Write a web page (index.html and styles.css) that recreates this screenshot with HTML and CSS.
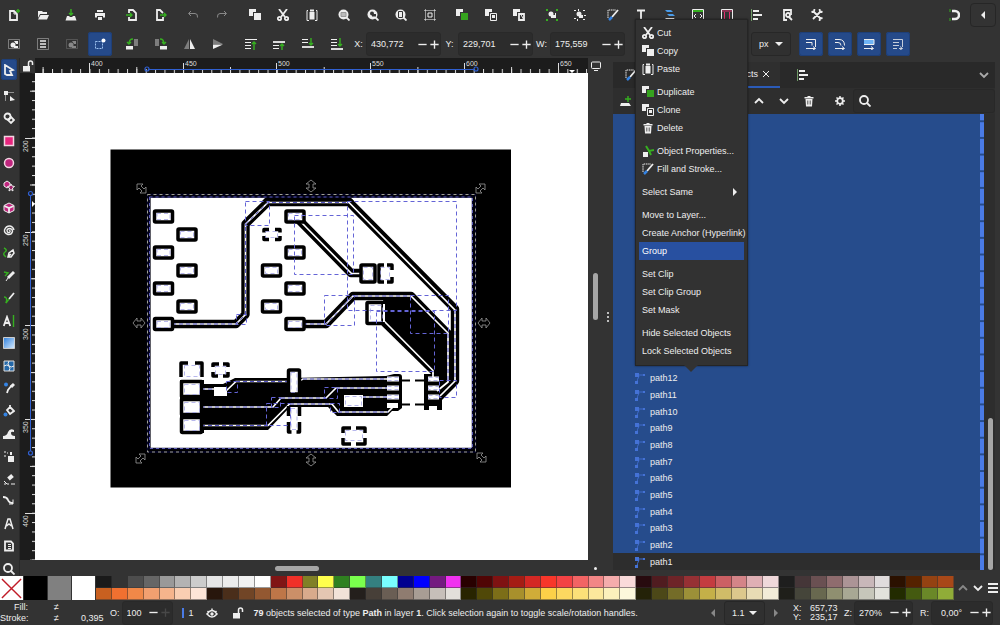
FILE: index.html
```html
<!DOCTYPE html>
<html lang="en">
<head>
<meta charset="utf-8">
<title>Vector editor</title>
<link rel="stylesheet" href="styles.css">
</head>
<body>
<svg class="sprite" aria-hidden="true">
  <symbol id="i-new" viewBox="0 0 12 12"><path class="l2" d="M2 2h4l3 3v6H2z"/><path class="l" d="M6 2v3h3"/><path class="g" d="M10 0v4M8 2h4"/></symbol>
  <symbol id="i-open" viewBox="0 0 12 12"><path class="f" d="M1 2h4l1 1h4v2H3L1 9zM3.500 6H12l-2 4.500H1z"/></symbol>
  <symbol id="i-save" viewBox="0 0 12 12"><path class="f" d="M2 7h2l1 1h2l1-1h2l1.500 4.500H.5z"/><path class="g" d="M6 0v6M4 4l2 2 2-2"/></symbol>
  <symbol id="i-print" viewBox="0 0 12 12"><path class="f" d="M3 1h6v2H3zM1 4h10v4.500H9V7H3v1.500H1zM4 8h4v3H4z"/></symbol>
  <symbol id="i-import" viewBox="0 0 12 12"><path class="l2" d="M3 4V1h4l3 3v7H3V8"/><path class="g" d="M0 6h6M4 4l2 2-2 2"/></symbol>
  <symbol id="i-export" viewBox="0 0 12 12"><path class="l2" d="M8 4L5 1H2v10h6V8"/><path class="g" d="M5 6h6M9 4l2 2-2 2"/></symbol>
  <symbol id="i-undo" viewBox="0 0 12 12"><path class="l" d="M4 2L1.500 4.500 4 7M2 4.500h6q3 0 2.500 4"/></symbol>
  <symbol id="i-redo" viewBox="0 0 12 12"><path class="l" d="M8 2l2.500 2.500L8 7M10 4.500H4q-3 0-2.500 4"/></symbol>
  <symbol id="i-copy" viewBox="0 0 12 12"><path class="f" d="M0 0h7v3H4v4H0zM5 4h7v7H5z"/></symbol>
  <symbol id="i-cut" viewBox="0 0 12 12"><path class="l2" d="M2 0l6 8M10 0L4 8"/><circle class="l2" cx="2.500" cy="9.500" r="1.700"/><circle class="l2" cx="9.500" cy="9.500" r="1.700"/></symbol>
  <symbol id="i-paste" viewBox="0 0 12 12"><path class="l" d="M2 1.500H1v10h2M10 1.500h1v10H9"/><path class="f" d="M3.500 3h5v7.500h-5zM4 .5h4v2H4z"/></symbol>
  <symbol id="i-zsel" viewBox="0 0 12 12"><circle class="f" cx="5.500" cy="5.500" r="5"/><path class="l2" d="M8 8l3.500 3.500"/><path d="M3 3.500h5v4H3z" fill="#bbb" stroke="#999"/></symbol>
  <symbol id="i-zdraw" viewBox="0 0 12 12"><circle class="f" cx="5.500" cy="5.500" r="5"/><path class="l2" d="M8 8l3.500 3.500"/><circle cx="5" cy="4.500" r="2" fill="#333"/><path fill="#333" d="M5 5h4v2.500H5z"/></symbol>
  <symbol id="i-zpage" viewBox="0 0 12 12"><circle class="f" cx="5.500" cy="5.500" r="5"/><path class="l2" d="M8 8l3.500 3.500"/><path fill="none" stroke="#333" d="M3.500 2.500h4v6h-4z"/></symbol>
  <symbol id="i-zcenter" viewBox="0 0 12 12"><path class="l" d="M1.500 0v12M10.500 0v12M0 1.500h12M0 10.500h12" opacity=".55"/><path class="l" d="M4 4h4v4H4z"/></symbol>
  <symbol id="i-dup" viewBox="0 0 12 12"><path class="f" d="M0 0h7v3H4v4H0z"/><path fill="#36a31f" d="M5 4h7v7H5z"/></symbol>
  <symbol id="i-clone" viewBox="0 0 12 12"><path class="f" d="M0 0h7v3H4v4H0z"/><path class="l" d="M5.500 4.500h6v7h-6z"/><path class="f" d="M7 6h3v3H7z"/></symbol>
  <symbol id="i-unclone" viewBox="0 0 12 12"><path class="f" d="M0 0h7v3H4v4H0z"/><path class="l2" d="M6 5h5v6H6z"/><path class="l" d="M7 4l4 7"/></symbol>
  <symbol id="i-group" viewBox="0 0 12 12"><circle class="f" cx="5" cy="5" r="2.500"/><path class="f" d="M5 6h4V4h1v5H5z"/><path fill="#36b020" d="M0 0h2v2H0zM10 0h2v2h-2zM0 10h2v2H0zM10 10h2v2h-2z"/></symbol>
  <symbol id="i-ungroup" viewBox="0 0 12 12"><circle class="f" cx="5" cy="5" r="2.500"/><path class="f" d="M5 6h4v3H5zM0 1h2v1H0zM4 0h1v2H4zM9 1h2v1H9zM0 9h2v1H0zM3 10h1v2H3zM10 6h2v1h-2zM9 10h2v1H9z"/></symbol>
  <symbol id="i-fill" viewBox="0 0 12 12"><path class="l" d="M1 9V1h8" stroke-dasharray="1.500 .7"/><path class="l2" d="M11 1L5 8"/><path d="M5 8l-3 3" stroke="#3584e4" stroke-width="2.500"/></symbol>
  <symbol id="i-text" viewBox="0 0 12 12"><path class="l2" d="M2 1.500h8M6 1v10"/></symbol>
  <symbol id="i-layers" viewBox="0 0 12 12"><path d="M1 1h6l2 2H3zM3 5h6l2 2H5z" fill="#4a9be8"/><path class="f" d="M1 9h9l1 2H3z"/></symbol>
  <symbol id="i-xml" viewBox="0 0 12 12"><path class="l" d="M.5 12V.5h11V12M4 5L2 7l2 2M8 5l2 2-2 2"/><path d="M1 2h10" stroke="#36b020" stroke-width="2"/></symbol>
  <symbol id="i-sel" viewBox="0 0 12 12"><path class="l" d="M.5 12V.5h11V12"/><path d="M1 2h10M3.500 3v8M8.500 3v8" stroke="#e0306e"/></symbol>
  <symbol id="i-align" viewBox="0 0 12 12"><path d="M1.500 0v12" stroke="#6f9a66"/><path class="f" d="M3 1h6v2H3zM3 5h9v2H3zM3 9h5v2H3z"/></symbol>
  <symbol id="i-prefs" viewBox="0 0 12 12"><path class="l2" d="M9 6V1H2v10h3"/><circle class="l2" cx="6" cy="6" r="2"/><path class="l2" d="M7 8l3 3"/></symbol>
  <symbol id="i-tools" viewBox="0 0 12 12"><path class="l2" d="M2 2l8 8M10 2L2 10M.500 3l2.500-.5L3.500 0M11.500 9l-2.500.5-.5 2.500M8.500 0l.5 2.500 2.500.5"/></symbol>
  <symbol id="i-snap" viewBox="0 0 12 12"><path class="l" stroke-width="2.500" d="M4 2h3a4 4 0 0 1 0 8H4"/><path d="M2 0v3M2 9v3" stroke="#36b020"/></symbol>
  <symbol id="i-left" viewBox="0 0 12 12"><path class="f" d="M8 2v8L4 6z"/></symbol>
  <symbol id="i-right" viewBox="0 0 12 12"><path class="f" d="M4 2v8l4-4z"/></symbol>
  <symbol id="i-selall" viewBox="0 0 12 12"><path class="l" d="M.5 1.500h11v9H.5z" opacity=".4"/><circle class="f" cx="5" cy="7" r="2.500"/><path class="f" d="M6 3h4v3H8zM6 8h4v2H6z"/></symbol>
  <symbol id="i-sellay" viewBox="0 0 12 12"><path class="l" d="M.5.5h11v11H.5z" opacity=".4"/><path d="M3 3h6M3 6h6M3 9h6" stroke="currentColor" stroke-width="1.500"/></symbol>
  <symbol id="i-touch" viewBox="0 0 12 12"><path fill="none" stroke="#9cc0ee" stroke-dasharray="2 1" d="M1.500 3.500h7v7h-7z"/><circle cx="9.500" cy="2.500" r="2" fill="#fff"/></symbol>
  <symbol id="i-rotl" viewBox="0 0 12 12"><path class="f" d="M0 8h7v3.500H0z"/><path class="f" opacity=".4" d="M8 1h4v7H8z"/><path class="g" d="M7 1Q3 1 3 6M1 4l2 2 2-2"/></symbol>
  <symbol id="i-rotr" viewBox="0 0 12 12"><path class="f" d="M5 8h7v3.500H5z"/><path class="f" opacity=".4" d="M0 1h4v7H0z"/><path class="g" d="M5 1q4 0 4 5M7 4l2 2 2-2"/></symbol>
  <symbol id="i-fliph" viewBox="0 0 12 12"><path class="f" opacity=".4" d="M5 1v10H0z"/><path class="f" d="M6 1v10h5z"/></symbol>
  <symbol id="i-flipv" viewBox="0 0 12 12"><path class="f" opacity=".4" d="M1 1v5h10z"/><path class="f" d="M1 11V6.500h10z"/></symbol>
  <symbol id="i-top" viewBox="0 0 12 12"><path class="l" d="M0 1.500h12M0 4.500h6M0 7.500h6M0 10.500h6"/><path class="g" d="M9 12V4M7 6l2-2 2 2"/></symbol>
  <symbol id="i-raise" viewBox="0 0 12 12"><path class="l" d="M0 7.500h6M0 10.500h6"/><path class="l2" d="M0 4h12"/><path class="g" d="M9 12V6M7 8l2-2 2 2"/></symbol>
  <symbol id="i-lower" viewBox="0 0 12 12"><path class="l" d="M0 1.500h6M0 4.500h6"/><path class="l2" d="M0 9h12"/><path class="g" d="M9 0v7M7 5l2 2 2-2"/></symbol>
  <symbol id="i-bottom" viewBox="0 0 12 12"><path class="l" d="M0 1.500h6M0 4.500h6M0 7.500h6"/><path class="l2" d="M0 11h12"/><path class="g" d="M9 0v8M7 6l2 2 2-2"/></symbol>
  <symbol id="i-s1" viewBox="0 0 12 12"><path class="l" d="M1 1.500h9.500V9M1 4.500h6v3M1 10.500h9M8 8.500l2.500 2-2.500 1.500"/></symbol>
  <symbol id="i-s2" viewBox="0 0 12 12"><path class="l" d="M1 1.500h4q5.500 0 5.500 6M1 4.500h3q3 0 3 3M1 10.500h9M8 8.500l2.500 2-2.500 1.500"/></symbol>
  <symbol id="i-s3" viewBox="0 0 12 12"><path d="M1 1h10v6H1z" fill="#6fb4f5"/><path class="l" d="M1 1.500h10v5H1M1 10.500h9M8 8.500l2.500 2-2.500 1.500"/></symbol>
  <symbol id="i-s4" viewBox="0 0 12 12"><path class="l" d="M1 1.500h9.500V9M1 4.500h6M1 7.500h6M1 10.500h4M7 10.500h3M8 8.500l2.500 2-2.500 1.500" opacity=".8"/></symbol>
  <symbol id="i-arrow" viewBox="0 0 12 12"><path class="l2" d="M2 1l8 5-3 1 2 4H4l-2-1z"/></symbol>
  <symbol id="i-node" viewBox="0 0 12 12"><path class="l" d="M5 2.500h6M2.500 5v6" opacity=".5"/><path class="f" d="M1 1h4v4H1zM7 6l5 4-5 1z"/></symbol>
  <symbol id="i-shape" viewBox="0 0 12 12"><circle class="l2" cx="4.500" cy="4.500" r="3"/><path class="l2" d="M8 5l3 3-3 3-3-3z"/></symbol>
  <symbol id="i-rect" viewBox="0 0 12 12"><path d="M1.500 1.500h9v9h-9z" fill="#e8257e" stroke="#f3d5e2" stroke-width="1.500"/></symbol>
  <symbol id="i-circ" viewBox="0 0 12 12"><circle cx="6" cy="6" r="4.500" fill="#c0257e" stroke="#f3d5e2" stroke-width="1.500"/></symbol>
  <symbol id="i-star" viewBox="0 0 12 12"><path d="M4 1l3 2v3L4 8 1 6V3z" fill="#c0257e" stroke="#eee"/><path d="M8 4l1 2 2.500.5-2 1.500.5 3-2-1.500L6 11l.5-3-2-1.500L7 6z" fill="#a0206a" stroke="#eee"/></symbol>
  <symbol id="i-cube" viewBox="0 0 12 12"><path d="M6 1l5 2.500v5L6 11 1 8.500v-5z" fill="#c0257e" stroke="#eee"/><path class="l2" d="M1.500 4L6 6l4.500-2M6 6v5"/></symbol>
  <symbol id="i-spiral" viewBox="0 0 12 12"><path class="l" stroke-width="1.400" d="M6 6q1.500-1 1 .8-1 1.600-2.500.2Q3 4.500 6 3.500q3.500 0 3.500 3Q8.500 10 5 9.500 1 8 1.500 5 3 .8 7 1q3 .5 4 4"/></symbol>
  <symbol id="i-pen" viewBox="0 0 12 12"><path class="g" d="M1 1q4 2 1 4t1 5"/><path class="l" stroke-width="1.500" d="M5 10l1-4 4-3 1 3-3 4zM5 10l3-3"/></symbol>
  <symbol id="i-pencil" viewBox="0 0 12 12"><path class="g" d="M1 2l4 1-3 3"/><path class="l" stroke-width="3" d="M11 2L5 8"/><path class="l" d="M5 8l-2 3"/></symbol>
  <symbol id="i-brush" viewBox="0 0 12 12"><path class="g" d="M1 5q4 0 2 6"/><path class="l2" d="M11 1L6 7"/><path class="g" d="M6 7l-3 4"/></symbol>
  <symbol id="i-type" viewBox="0 0 12 12"><path class="l2" d="M.8 11L4 2l3.200 9M2 8h4"/><path class="g" d="M10.500 0v12"/></symbol>
  <symbol id="i-grad" viewBox="0 0 12 12"><defs><linearGradient id="gr" x2="1" y2="1"><stop stop-color="#2f80dc"/><stop offset="1" stop-color="#d8ecff"/></linearGradient></defs><path d="M.5.5h11v11H.5z" fill="url(#gr)" stroke="#ccc"/></symbol>
  <symbol id="i-mesh" viewBox="0 0 12 12"><path d="M1 1h10v10H1z" fill="#2468a8" stroke="#ddd"/><path class="l" d="M6 1q-2 3 0 5t0 5M1 6q3-2 5 0t5 0"/></symbol>
  <symbol id="i-drop" viewBox="0 0 12 12"><path class="l2" d="M9 3L5 8l-1 3"/><path class="l" stroke-width="3" d="M11 2L8 5"/><circle cx="3" cy="2.500" r="2" fill="#3584e4"/></symbol>
  <symbol id="i-bucket" viewBox="0 0 12 12"><path class="l2" d="M7 2l4 4-4 3-3-4zM7 0v4"/><circle cx="2.500" cy="9.500" r="2" fill="#3584e4"/></symbol>
  <symbol id="i-tweak" viewBox="0 0 12 12"><path class="f" d="M0 11V8q4 0 5-4 2-4 6-2v2q-3-1-3 1 0 3 4 3v3z"/></symbol>
  <symbol id="i-spray" viewBox="0 0 12 12"><path class="f" d="M5 6h6v6H5zM7 2h2v3H7z"/><path class="f" opacity=".5" d="M1 1h2v2H1zM4 2h1v2H4zM1 5h2v2H1z"/></symbol>
  <symbol id="i-eraser" viewBox="0 0 12 12"><path class="l" stroke-width="4" d="M9.500 2.500L5.500 6"/><path class="l" d="M1 8l3 3h2M8 11h4M1 11h2"/></symbol>
  <symbol id="i-conn" viewBox="0 0 12 12"><path class="l2" d="M0 2q4 0 5 3t5 3"/><path class="l" d="M10 4.500V9H6"/></symbol>
  <symbol id="i-lpe" viewBox="0 0 12 12"><path class="l" stroke-width="1.500" d="M2 11L5 1h2l3 10M3.500 8L6 6l2.500 2"/></symbol>
  <symbol id="i-pages" viewBox="0 0 12 12"><path class="l2" d="M2 1.500h6l2 2v7H2z"/><path class="l" d="M5 4.500h3M5 6.500h3M5 8.500h3"/></symbol>
  <symbol id="i-search" viewBox="0 0 12 12"><circle class="l2" cx="5" cy="5" r="4"/><path class="l2" d="M8 8l3.500 3.500"/></symbol>
  <symbol id="i-unlock" viewBox="0 0 12 12"><path class="f" d="M1 6h7v5.500H1z"/><path class="l" stroke-width="1.500" d="M6.500 6V3q0-2 2-2t2 2v2"/></symbol>
  <symbol id="i-screen" viewBox="0 0 12 12"><rect class="l" x="1.500" y="2" width="9" height="6.500" rx="1"/><path class="l" d="M4 10.500h4"/></symbol>
  <symbol id="i-trash" viewBox="0 0 12 12"><path class="f" d="M1.500 2h3V1h3v1h3v1.500h-9zM2.500 4h7l-.5 7.500H3z"/><path d="M4.800 5.500v4M7.200 5.500v4" stroke="#555"/></symbol>
  <symbol id="i-gear" viewBox="0 0 12 12"><circle class="l2" cx="6" cy="6" r="2.800"/><path class="l" stroke-width="1.500" d="M6 1v2M6 9v2M1 6h2M9 6h2M2.500 2.500l1.300 1.300M8.200 8.200l1.300 1.300M9.500 2.500L8.200 3.800M3.800 8.200L2.500 9.500"/></symbol>
  <symbol id="i-up" viewBox="0 0 12 12"><path class="l2" d="M2 8l4-4 4 4"/></symbol>
  <symbol id="i-down" viewBox="0 0 12 12"><path class="l2" d="M2 4l4 4 4-4"/></symbol>
  <symbol id="i-addlay" viewBox="0 0 12 12"><path class="f" d="M1 8h8l2 3H0z"/><path class="g" d="M8 1v6M5 4h6"/></symbol>
  <symbol id="i-props" viewBox="0 0 12 12"><path class="f" d="M1 7h5v5H1z"/><path d="M4 1l3 5 5-1M7 6l2 4" fill="none" stroke="#36b020" stroke-width="2"/></symbol>
  <symbol id="i-eye" viewBox="0 0 12 12"><path class="l" stroke-width="1.500" d="M1 7q5-7 10 0-5 6-10 0zM1.500 4l1 1M10.500 4l-1 1M6 1.500V4"/><circle class="f" cx="6" cy="7" r="1.700"/></symbol>
  <symbol id="i-menu" viewBox="0 0 12 12"><path class="l2" d="M1 2h10M1 6h10M1 10h10"/></symbol>
  <symbol id="i-minus" viewBox="0 0 12 12"><path class="l" stroke-width="1.500" d="M1.500 6h9"/></symbol>
  <symbol id="i-plus" viewBox="0 0 12 12"><path class="l" stroke-width="1.500" d="M1.500 6h9M6 1.500v9"/></symbol>
  <symbol id="i-x" viewBox="0 0 12 12"><path class="l" d="M3 3l6 6M9 3L3 9"/></symbol>
  <symbol id="i-path" viewBox="0 0 12 12"><path d="M3 12q0-5 2-8M5 3h6" stroke="#3f6bcc" fill="none"/><path fill="#4472d6" d="M1 1h4v4H1zM1 9h3v3H1zM9 2h2v2H9z"/></symbol>
</svg>

<div class="app">
  <header class="bar commands">
    <div class="icons wide">
      <button aria-label="New"><svg><use href="#i-new"/></svg></button><button aria-label="Open"><svg><use href="#i-open"/></svg></button><button aria-label="Save"><svg><use href="#i-save"/></svg></button><button aria-label="Print"><svg><use href="#i-print"/></svg></button><i></i>
      <button aria-label="Import"><svg><use href="#i-import"/></svg></button><button aria-label="Export"><svg><use href="#i-export"/></svg></button><i></i>
      <button class="dim" aria-label="Undo"><svg><use href="#i-undo"/></svg></button><button class="dim" aria-label="Redo"><svg><use href="#i-redo"/></svg></button><i></i>
      <button aria-label="Copy"><svg><use href="#i-copy"/></svg></button><button aria-label="Cut"><svg><use href="#i-cut"/></svg></button><button aria-label="Paste"><svg><use href="#i-paste"/></svg></button><i></i>
      <button aria-label="Zoom selection"><svg><use href="#i-zsel"/></svg></button><button aria-label="Zoom drawing"><svg><use href="#i-zdraw"/></svg></button><button aria-label="Zoom page"><svg><use href="#i-zpage"/></svg></button><button aria-label="Center page"><svg><use href="#i-zcenter"/></svg></button><i></i>
      <button aria-label="Duplicate"><svg><use href="#i-dup"/></svg></button><button aria-label="Clone"><svg><use href="#i-clone"/></svg></button><button aria-label="Unlink clone"><svg><use href="#i-unclone"/></svg></button><i></i>
      <button aria-label="Group"><svg><use href="#i-group"/></svg></button><button aria-label="Ungroup"><svg><use href="#i-ungroup"/></svg></button><i></i>
      <button aria-label="Fill and stroke"><svg><use href="#i-fill"/></svg></button><button aria-label="Text"><svg><use href="#i-text"/></svg></button><button aria-label="Layers"><svg><use href="#i-layers"/></svg></button><button aria-label="XML editor"><svg><use href="#i-xml"/></svg></button><button aria-label="Selectors"><svg><use href="#i-sel"/></svg></button><button aria-label="Align"><svg><use href="#i-align"/></svg></button><i></i>
      <button aria-label="Document properties"><svg><use href="#i-prefs"/></svg></button><button aria-label="Preferences"><svg><use href="#i-tools"/></svg></button>
    </div>
    <div class="snap"><button aria-label="Snap"><svg><use href="#i-snap"/></svg></button><button class="boxed" aria-label="Snap options"><svg><use href="#i-left"/></svg></button></div>
  </header>

  <div class="bar options">
    <div class="icons narrow">
      <button aria-label="Select all"><svg><use href="#i-selall"/></svg></button><button aria-label="Select in all layers"><svg><use href="#i-sellay"/></svg></button><button class="dim" aria-label="Deselect"><svg><use href="#i-selall"/></svg></button><button class="on" aria-label="Touch select"><svg><use href="#i-touch"/></svg></button><i></i>
      <button aria-label="Rotate left"><svg><use href="#i-rotl"/></svg></button><button aria-label="Rotate right"><svg><use href="#i-rotr"/></svg></button><button aria-label="Flip horizontal"><svg><use href="#i-fliph"/></svg></button><button aria-label="Flip vertical"><svg><use href="#i-flipv"/></svg></button><i></i>
      <button aria-label="Raise to top"><svg><use href="#i-top"/></svg></button><button aria-label="Raise"><svg><use href="#i-raise"/></svg></button><button aria-label="Lower"><svg><use href="#i-lower"/></svg></button><button aria-label="Lower to bottom"><svg><use href="#i-bottom"/></svg></button>
    </div>
    <label class="coord" for="x">X:</label><div class="spin"><input id="x" value="430,772"><button aria-label="Decrease X"><svg><use href="#i-minus"/></svg></button><button aria-label="Increase X"><svg><use href="#i-plus"/></svg></button></div>
    <label class="coord" for="y">Y:</label><div class="spin"><input id="y" value="229,701"><button aria-label="Decrease Y"><svg><use href="#i-minus"/></svg></button><button aria-label="Increase Y"><svg><use href="#i-plus"/></svg></button></div>
    <label class="coord" for="w">W:</label><div class="spin"><input id="w" value="175,559"><button aria-label="Decrease W"><svg><use href="#i-minus"/></svg></button><button aria-label="Increase W"><svg><use href="#i-plus"/></svg></button></div>
    <div class="drop unit"><select aria-label="Unit"><option>px</option></select></div>
    <div class="affect"><button class="on" aria-label="Scale stroke"><svg><use href="#i-s1"/></svg></button><button class="on" aria-label="Scale corners"><svg><use href="#i-s2"/></svg></button><button class="on" aria-label="Move gradients"><svg><use href="#i-s3"/></svg></button><button class="on" aria-label="Move patterns"><svg><use href="#i-s4"/></svg></button></div>
  </div>

  <main class="work">
    <nav class="tools">
      <button class="on" aria-label="Selector"><svg><use href="#i-arrow"/></svg></button><button aria-label="Node"><svg><use href="#i-node"/></svg></button><button aria-label="Shape builder"><svg><use href="#i-shape"/></svg></button><button aria-label="Rectangle"><svg><use href="#i-rect"/></svg></button><button aria-label="Ellipse"><svg><use href="#i-circ"/></svg></button><button aria-label="Star"><svg><use href="#i-star"/></svg></button><button aria-label="3D box"><svg><use href="#i-cube"/></svg></button><button aria-label="Spiral"><svg><use href="#i-spiral"/></svg></button><button aria-label="Pen"><svg><use href="#i-pen"/></svg></button><button aria-label="Pencil"><svg><use href="#i-pencil"/></svg></button><button aria-label="Calligraphy"><svg><use href="#i-brush"/></svg></button><button aria-label="Text tool"><svg><use href="#i-type"/></svg></button><button aria-label="Gradient"><svg><use href="#i-grad"/></svg></button><button aria-label="Mesh"><svg><use href="#i-mesh"/></svg></button><button aria-label="Dropper"><svg><use href="#i-drop"/></svg></button><button aria-label="Paint bucket"><svg><use href="#i-bucket"/></svg></button><button aria-label="Tweak"><svg><use href="#i-tweak"/></svg></button><button aria-label="Spray"><svg><use href="#i-spray"/></svg></button><button aria-label="Eraser"><svg><use href="#i-eraser"/></svg></button><button aria-label="Connector"><svg><use href="#i-conn"/></svg></button><button aria-label="Measure"><svg><use href="#i-lpe"/></svg></button><button aria-label="Pages"><svg><use href="#i-pages"/></svg></button><button aria-label="Zoom"><svg><use href="#i-search"/></svg></button>
    </nav>

    <section class="desk">
      <div class="corner"><svg><use href="#i-unlock"/></svg></div>
      <svg class="ruler-h" viewBox="35 58 553 15" preserveAspectRatio="xMinYMin slice">
        <defs><pattern id="th" x="89.500" y="58" width="9.370" height="15" patternUnits="userSpaceOnUse"><path d="M.5 11v4" stroke="#ddd"/></pattern>
        <pattern id="th2" x="42.600" y="58" width="93.700" height="15" patternUnits="userSpaceOnUse"><path d="M.5 9v6" stroke="#ddd"/></pattern></defs>
        <path fill="url(#th)" d="M35 58h553v15H35z"/><path fill="url(#th2)" d="M35 58h553v15H35z"/>
        <path stroke="#ddd" d="M89.500 63v10M183.500 63v10M276.500 63v10M370.500 63v10M464.500 63v10M558.500 63v10"/>
        <g class="num"><text x="91" y="66">400</text><text x="185" y="66">450</text><text x="278" y="66">500</text><text x="372" y="66">550</text><text x="466" y="66">600</text><text x="560" y="66">650</text></g>
        <path d="M148 69.500h326" stroke="#2f5fd0"/><circle class="end" cx="147" cy="69" r="2"/><circle class="end" cx="476" cy="69" r="2"/>
        <path fill="#fff" d="M569 70h6l-3 3z"/>
      </svg>
      <div class="corner"><svg><use href="#i-screen"/></svg></div>

      <svg class="ruler-v" viewBox="20 73 15 487" preserveAspectRatio="xMinYMin slice">
        <defs><pattern id="tv" x="20" y="137.500" width="15" height="9.380" patternUnits="userSpaceOnUse"><path d="M12 .5h3" stroke="#ddd"/></pattern>
        <pattern id="tv2" x="20" y="184.500" width="15" height="93.800" patternUnits="userSpaceOnUse"><path d="M10 .5h5" stroke="#ddd"/></pattern></defs>
        <path fill="url(#tv)" d="M20 73h15v487H20z"/><path fill="url(#tv2)" d="M20 73h15v487H20z"/>
        <path stroke="#ddd" d="M25 138.500h10M25 232.500h10M25 325.500h10M25 419.500h10M25 513.500h10"/>
        <g class="num"><text transform="translate(28 152)rotate(-90)">200</text><text transform="translate(28 246)rotate(-90)">250</text><text transform="translate(28 340)rotate(-90)">300</text><text transform="translate(28 433)rotate(-90)">350</text><text transform="translate(28 527)rotate(-90)">400</text></g>
        <path d="M30.500 195v256" stroke="#2f5fd0"/><circle class="end" cx="30.500" cy="193.500" r="2"/><circle class="end" cx="30.500" cy="453" r="2"/>
        <path fill="#fff" d="M32 201v6l3-3z"/>
      </svg>

      <svg class="canvas" viewBox="35 73 553 487" preserveAspectRatio="xMinYMin meet" role="img" aria-label="Circuit board drawing">
        <path d="M110.500 149.500h400.500v338H110.500z"/>
        <path fill="#fff" d="M150.500 197.500h321.500v250.500H150.500z"/>
        <g class="pad">
          <rect x="154.500" y="211" width="18" height="11" rx="1"/><rect x="178" y="229" width="18" height="11" rx="1"/><rect x="154.500" y="247" width="18" height="11" rx="1"/><rect x="178" y="265" width="18" height="11" rx="1"/><rect x="154.500" y="283" width="18" height="11" rx="1"/><rect x="178" y="301" width="18" height="11" rx="1"/>
          <rect x="286" y="247" width="18" height="11" rx="1"/><rect x="262.500" y="265" width="18" height="11" rx="1"/><rect x="286" y="283" width="18" height="11" rx="1"/><rect x="262.500" y="301" width="18" height="11" rx="1"/>
        </g>
        <path d="M266 197h84l4 4h-92z"/>
        <g class="wide-trace">
          <path d="M172 324h64l9.500-9.500V224L268 202h81l106 107v72l-16 16M299 220l52 53h12M303 324h23l27-28h58l37 38v49l-12 11"/>
        </g>
        <path d="M384 298h28l36 35v50l-14 8v-17l-8-8-50-46z"/>
        <path d="M203 384h20l12-6h56l95-2 8-2h5q3 0 3 3v31l-4 3h-6l-5 5h-50l-9-9h-38l-22 23h-67z"/>
        <path d="M180 380h24v53h-24zM424 374h15l3 4v32h-5v-4h-8v4h-5z"/>
        <path d="M383 324l50 49" stroke="#000" stroke-width="4"/>
        <g class="core"><path d="M172 324h64l9.500-9.500V224L268 202.500h81L455 310v71l-15 15M299 220l52.500 53.500H363M303 324h23l27-28h58l37 37v49l-11 9M384 321l49 49.500V377M201 389h14M226 391l10-9.500h55M297 382l6-3h85M201 407h72l8-9h45l10-10h52M201 425.500h67l21.500-21.500H332l6.500 8H388l5-5M362 397h26"/></g>
        <g class="thread"><path d="M172 324h64l9.500-9.500V224L268 202.500h81M455 310v71M303 324h23l27-28h58M448 334v48M236 381.500h55M303 379h85M201 407h72M281 398h45M336 388h52M201 425.500h67M290 404h42M338 412h50M201 389h14M362 397h26"/></g>
        <g class="pad">
          <rect x="154.500" y="318.500" width="18" height="11" rx="1"/><rect x="286" y="211" width="18" height="11" rx="1"/><rect x="286" y="318.500" width="18" height="11" rx="1"/>
          <rect x="361" y="265" width="14" height="17" rx="1"/><rect x="367" y="302.500" width="16" height="21" rx="1"/><rect x="288.500" y="370" width="11" height="24" rx="1"/>
          <rect x="181.500" y="381.500" width="20" height="15"/><rect x="181.500" y="399.500" width="20" height="15"/><rect x="181.500" y="417.500" width="20" height="15" rx="1"/>
        </g>
        <g class="pad">
          <path d="M269 229.500h-5v3M264 236v3.500h5M275 229.500h5v3M280 236v3.500h-5M384 265h-5v17h5M387 265h5v5M392 277v5h-5M188 363h-7v14M195 363h7v14M219 364h-6v3M213 372v4h5M223 364h5v3M228 372v4h-5M288.500 406v10M299.500 406v10M288.500 422v10h3M299.500 422v10h-3M351 428h-8v5M343 438v6h8M356 428h9v5M365 438v6h-9"/>
        </g>
        <path fill="#fff" d="M214 387h13v9h-13zM344 395h19v12h-19zM383 304h2v18h-2zM403 382h21v22h-21z"/>
        <path stroke="#000" stroke-width="2" d="M402 380.500h8M415 380.500h9M402 404.500h8M415 404.500h9"/>
        <path stroke="#fff" stroke-width="5" d="M387 379h12M387 388h12M387 397h12M387 405.500h11M428 379h11M428 388h11M428 397h11"/>
        <path stroke="#000" stroke-width="3" d="M425 408h4M437 408h5"/>
        <g class="bounds">
          <path d="M245.500 201.500h24v24h-24zM294.500 215.500h59v59h-59zM347.500 201.500h109v109h-109zM324.500 295.500h30v30h-30zM376.500 311.500h58v60h-58zM410.500 295.500h38v38h-38zM439.500 380.500h17v17h-17zM236.500 314.500h10v10h-10zM226.500 381.500h11v11h-11zM266.500 403.500h24v22h-24zM271.500 397.500h9v10h-9zM324.500 387.500h13v11h-13zM330.500 403.500h9v9h-9z"/>
        </g>
        <g class="bounds faint">
          <path d="M157 213.500h13v6h-13zM180.500 231.500h13v6h-13zM157 249.500h13v6h-13zM180.500 267.500h13v6h-13zM157 285.500h13v6h-13zM180.500 303.500h13v6h-13zM157 321.500h13v6h-13zM288.500 213.500h13v6h-13zM265.500 231.500h12v6h-12zM288.500 249.500h13v6h-13zM265.500 267.500h12v6h-12zM288.500 285.500h13v6h-13zM265.500 303.500h12v6h-12zM288.500 321.500h13v6h-13zM363.500 267.500h9v12h-9zM380.500 267.500h9v12h-9zM184.500 365.500h15v11h-15zM184.500 384.500h15v10h-15zM184.500 402.500h15v10h-15zM184.500 420.500h15v10h-15zM215.500 366.500h10v8h-10zM291 372.500h6v20h-6zM291 408.500h6v21h-6zM345.500 430.500h17v10h-17zM345.500 396.500h16v9h-16zM370.500 305.500h12v16h-12zM387.500 377.500h11v3h-11zM387.500 386.500h11v3h-11zM387.500 395.500h11v3h-11zM428.500 377.500h10v3h-10zM428.500 386.500h10v3h-10zM428.500 395.500h10v3h-10z"/>
        </g>
        <path class="marquee-base" d="M147.500 194.500h328v257.500h-328zM149.500 197h323v251.500h-323z"/>
        <path class="marquee" d="M147.500 194.500h328v257.500h-328z"/>
        <path class="marquee blue" d="M149.500 197h323v251.500h-323z"/>
        <defs>
          <path id="dbl" d="M-6 0l4-5v3h4v-3l4 5-4 5V2h-4v3z"/>
          <path id="dgl" d="M-4-4h6l-2 2 3 3 2-2v6h-6l2-2-3-3-2 2z"/>
        </defs>
        <g class="handles"><use href="#dbl" x="139" y="323"/><use href="#dbl" x="484" y="323"/><use href="#dbl" transform="translate(311 186)rotate(90)"/><use href="#dbl" transform="translate(311 460)rotate(90)"/><use href="#dgl" x="141" y="188"/><use href="#dgl" transform="translate(481 188)scale(-1 1)"/><use href="#dgl" transform="translate(141 458)scale(-1 1)"/><use href="#dgl" x="481" y="457"/></g>
      </svg>
      <div class="vscroll"><span></span></div>
      <div></div>
      <div class="hscroll"><span></span></div>
      <div class="cms"><span></span></div>
    </section>

    <div class="grip"><i></i><i></i><i></i></div>

    <aside class="dock">
      <div class="tabs">
        <button class="tab" aria-label="Fill and stroke tab"><svg><use href="#i-fill"/></svg></button>
        <button class="tab active">Layers and Objects <svg><use href="#i-x"/></svg></button>
        <button class="tab" aria-label="Align tab"><svg><use href="#i-align"/></svg></button>
        <button class="tab more" aria-label="More tabs"><svg><use href="#i-down"/></svg></button>
      </div>
      <div class="actions">
        <button aria-label="Add layer"><svg><use href="#i-addlay"/></svg></button>
        <span class="gap"></span>
        <button aria-label="Raise object"><svg><use href="#i-up"/></svg></button><button aria-label="Lower object"><svg><use href="#i-down"/></svg></button><button aria-label="Delete object"><svg><use href="#i-trash"/></svg></button><button class="gear" aria-label="Settings"><svg><use href="#i-gear"/></svg></button>
        <label class="find"><svg><use href="#i-search"/></svg><input type="search" aria-label="Search objects"></label>
      </div>
      <div class="listing">
        <ul>
          <li><svg><use href="#i-path"/></svg>path12</li><li><svg><use href="#i-path"/></svg>path11</li><li><svg><use href="#i-path"/></svg>path10</li><li><svg><use href="#i-path"/></svg>path9</li><li><svg><use href="#i-path"/></svg>path8</li><li><svg><use href="#i-path"/></svg>path7</li><li><svg><use href="#i-path"/></svg>path6</li><li><svg><use href="#i-path"/></svg>path5</li><li><svg><use href="#i-path"/></svg>path4</li><li><svg><use href="#i-path"/></svg>path3</li><li><svg><use href="#i-path"/></svg>path2</li><li class="plain"><svg><use href="#i-path"/></svg>path1</li>
        </ul>
        <div class="strip"></div>
        <div class="lscroll"><span></span></div>
      </div>
    </aside>
  </main>

  <div class="palette">
    <button class="big none" aria-label="No color"><svg viewBox="0 0 24 24"><path d="M2 2l20 20M22 2L2 22" stroke="#c01c28" stroke-width="1.500"/></svg></button>
    <button class="big black" aria-label="Black"></button><button class="big grey" aria-label="Gray"></button><button class="big white" aria-label="White"></button>
    <div class="swatches" id="swatches"></div>
    <div class="pnav"><button class="dim" aria-label="Previous colors"><svg><use href="#i-up"/></svg></button><button aria-label="Next colors"><svg><use href="#i-down"/></svg></button><button aria-label="Palette menu"><svg><use href="#i-menu"/></svg></button></div>
  </div>

  <footer class="status">
    <dl class="style"><dt>Fill:</dt><dd>≠</dd><dd></dd><dt>Stroke:</dt><dd>≠</dd><dd>0,395</dd></dl>
    <label for="o">O:</label>
    <div class="spin opacity"><input id="o" value="100"><button aria-label="Decrease opacity"><svg><use href="#i-minus"/></svg></button><button class="off" aria-label="Increase opacity"><svg><use href="#i-plus"/></svg></button></div>
    <span class="layer">1</span>
    <button class="sicon" aria-label="Layer visible"><svg><use href="#i-eye"/></svg></button>
    <button class="sicon" aria-label="Layer unlocked"><svg><use href="#i-unlock"/></svg></button>
    <p class="message"><b>79</b> objects selected of type <b>Path</b> in layer <b>1</b>. Click selection again to toggle scale/rotation handles.</p>
    <button class="pg dim" aria-label="Previous page"><svg><use href="#i-left"/></svg></button>
    <div class="drop page"><select aria-label="Page"><option>1.1</option></select></div>
    <button class="pg dim" aria-label="Next page"><svg><use href="#i-right"/></svg></button>
    <dl class="pos"><dt>X:</dt><dd>657,73</dd><dt>Y:</dt><dd>235,17</dd></dl>
    <label for="z">Z:</label>
    <div class="spin zoom"><input id="z" value="270%"><button aria-label="Zoom out"><svg><use href="#i-minus"/></svg></button><button aria-label="Zoom in"><svg><use href="#i-plus"/></svg></button></div>
    <label for="r">R:</label>
    <div class="spin rot"><input id="r" value="0,00°"><button aria-label="Rotate left"><svg><use href="#i-minus"/></svg></button><button aria-label="Rotate right"><svg><use href="#i-plus"/></svg></button></div>
  </footer>

  <div class="menu" role="menu">
    <button role="menuitem"><svg><use href="#i-cut"/></svg>Cut</button>
    <button role="menuitem"><svg><use href="#i-copy"/></svg>Copy</button>
    <button role="menuitem"><svg><use href="#i-paste"/></svg>Paste</button>
    <hr>
    <button role="menuitem"><svg><use href="#i-dup"/></svg>Duplicate</button>
    <button role="menuitem"><svg><use href="#i-clone"/></svg>Clone</button>
    <button role="menuitem"><svg><use href="#i-trash"/></svg>Delete</button>
    <hr>
    <button role="menuitem"><svg><use href="#i-props"/></svg>Object Properties...</button>
    <button role="menuitem"><svg><use href="#i-fill"/></svg>Fill and Stroke...</button>
    <hr>
    <button role="menuitem">Select Same<svg class="sub"><use href="#i-right"/></svg></button>
    <hr>
    <button role="menuitem">Move to Layer...</button>
    <button role="menuitem">Create Anchor (Hyperlink)</button>
    <button role="menuitem" class="hot">Group</button>
    <hr>
    <button role="menuitem">Set Clip</button>
    <button role="menuitem">Set Clip Group</button>
    <button role="menuitem">Set Mask</button>
    <hr>
    <button role="menuitem">Hide Selected Objects</button>
    <button role="menuitem">Lock Selected Objects</button>
  </div>
</div>
<script src="palette.js"></script>
</body>
</html>
```

FILE: styles.css
```css
* { box-sizing: border-box; }
body { margin: 0; background: #333; color: #eee; font: 9px/12px "Liberation Sans", Arial, sans-serif; }
button, input, select { font: inherit; color: inherit; margin: 0; padding: 0; border: 0; background: none; }
button { display: flex; align-items: center; justify-content: center; }
svg { width: 12px; height: 12px; flex: none; display: block; }
ul, dl, dd, p { margin: 0; padding: 0; list-style: none; }
.sprite { position: absolute; width: 0; height: 0; }
.f { fill: currentColor; }
.l { fill: none; stroke: currentColor; }
.l2 { fill: none; stroke: currentColor; stroke-width: 1.8px; }
.g { fill: none; stroke: #36b020; stroke-width: 1.4px; }
.dim { color: #888; }

.app { position: relative; display: flex; flex-direction: column; height: 100vh; min-height: 600px; overflow: hidden; }
.bar { display: flex; align-items: center; flex: none; }
.commands { height: 30px; justify-content: space-between; }
.options { height: 28px; }
.icons { display: flex; align-items: center; flex: none; }
.icons button { flex: 1; height: 24px; }
.icons i { width: 4px; }
.wide { width: 831px; }
.narrow { width: 351px; }
.on { background: #254a8a; border-radius: 3px; box-shadow: inset 0 0 0 1px #1e3f78; }
.icons .on { flex: 0 1 24px; margin: 0 2px; }
.snap { display: flex; align-items: center; gap: 10px; padding-right: 4px; }
.boxed { width: 26px; height: 24px; border: 1px solid #262626; border-radius: 4px; }

.coord { width: 17px; text-align: center; flex: none; }
.spin { display: flex; align-items: center; height: 24px; background: #2c2c2c; border: 1px solid #292929; border-radius: 3px; flex: none; }
.options .spin { width: 75px; }
.coord:first-of-type { width: 15px; }
.spin input { flex: 1; width: 0; min-width: 0; padding-left: 4px; outline: 0; }
.spin button { width: 12px; height: 20px; }
.spin svg { width: 11px; height: 11px; }
.off { color: #484848; }
.drop { position: relative; flex: none; height: 24px; border: 1px solid #272727; border-radius: 3px; background: #303030; }
.drop select { appearance: none; width: 100%; height: 100%; padding-left: 7px; outline: 0; }
.drop::after { content: ""; position: absolute; right: 7px; top: 9px; border: 4px solid transparent; border-top-color: #eee; border-bottom: 0; pointer-events: none; }
.unit { width: 40px; margin-left: 126px; }
.affect { display: flex; gap: 5px; margin-left: 8px; }
.affect button { width: 24px; height: 24px; }

.work { display: flex; flex: 1; min-height: 0; }
.tools { width: 20px; flex: none; display: flex; flex-direction: column; justify-content: space-between; border-right: 1px solid #292929; }
.tools button { height: 14px; width: 16px; margin-left: 1px; }
.tools .on { height: 21px; margin-top: 1px; }
.desk { flex: 1; min-width: 0; display: grid; grid-template: 15px 1fr 16px / 15px 1fr 15px; background: #333; }
.corner { display: flex; align-items: center; justify-content: center; }
.ruler-h, .ruler-v { width: 100%; height: 100%; background: #1c1c1c; min-width: 0; min-height: 0; }
.num { font-size: 7px; fill: #ddd; }
.end { fill: none; stroke: #2f5fd0; stroke-width: 1.2px; }
.canvas { width: 100%; height: 100%; background: #fff; min-width: 0; min-height: 0; }
.pad { fill: #fff; stroke: #000; stroke-width: 3.5px; stroke-linejoin: round; }
.pad path { fill: none; }
.wide-trace { fill: none; stroke: #000; stroke-width: 8.4px; stroke-linejoin: round; }
.core { fill: none; stroke: #fff; stroke-width: 1.7px; }
.thread { fill: none; stroke: #5656c8; stroke-width: 1px; stroke-dasharray: 4 3; }
.bounds { fill: none; stroke: #6464d6; stroke-width: 1px; stroke-dasharray: 4 3; }
.bounds.faint { stroke: #9a9ae4; stroke-width: .7px; }
.marquee-base { fill: none; stroke: #05052a; stroke-width: 1.5px; }
.marquee { fill: none; stroke: #a0a090; stroke-width: 1px; stroke-dasharray: 3 3; }
.marquee.blue { stroke: #5b5bb8; }
.handles { fill: #000; stroke: #999; stroke-width: .8px; }
.vscroll { display: flex; justify-content: center; align-items: flex-start; padding-top: 200px; }
.vscroll span { width: 5px; height: 47px; border-radius: 3px; background: #a6a6a6; }
.hscroll { display: flex; align-items: center; padding-left: 240px; }
.hscroll span { width: 44px; height: 5px; border-radius: 3px; background: #a6a6a6; }
.cms { display: flex; align-items: center; justify-content: center; }
.cms span { width: 3px; height: 3px; border-radius: 2px; background: #eee; }
.grip { width: 10px; flex: none; display: flex; flex-direction: column; align-items: center; justify-content: center; gap: 2px; }
.grip i { width: 2px; height: 2px; border-radius: 1px; background: #eee; }

.dock { width: 387px; flex: none; display: flex; flex-direction: column; padding: 4px 5px 6px 0; }
.tabs { display: flex; flex: none; height: 26px; background: #292929; }
.tab { width: 36px; }
.tab.active { flex: none; width: 131px; justify-content: flex-end; gap: 2px; padding-right: 8px; background: #2f2f2f; border-bottom: 2px solid #2b5bb8; }
.tab:nth-child(3) { width: 43px; }
.more { margin-left: auto; width: 22px; color: #aaa; }
.actions { display: flex; flex: none; align-items: center; height: 26px; background: #2e2e2e; }
.actions button { width: 25px; height: 24px; }
.gap { width: 108px; }
.actions .gear { margin-left: 6px; }
.find { flex: 1; display: flex; align-items: center; gap: 4px; height: 24px; margin-left: 1px; padding-left: 5px; border: 1px solid #282828; border-radius: 3px; background: #2c2c2c; }
.find input { flex: 1; min-width: 0; outline: 0; }
.listing { flex: 1; min-height: 0; display: grid; grid-template-columns: 1fr 4px 11px; background: #264c8c; }
.listing ul { display: grid; grid-template-rows: repeat(12, 1fr); height: 200px; align-self: end; }
.listing li { display: flex; align-items: center; gap: 4px; padding-left: 21px; }
.listing .plain { background: #2d2d2d; }
.strip { background: linear-gradient(#264c8c 2px, #4a7be6 2px) 0 100% / 4px calc(200px / 12); }
.lscroll { display: flex; align-items: flex-end; justify-content: flex-end; background: #2d2d2d; }
.lscroll span { width: 5px; height: 152px; margin-right: 2px; background: #a6a6a6; border-radius: 3px; }

.palette { display: flex; height: 24px; flex: none; }
.big { width: 24px; flex: none; border-right: 1px solid #333; }
.big svg { width: 23px; height: 23px; }
.none, .white { background: #fff; }
.black { background: #000; }
.grey { background: #808080; }
.swatches { flex: 1; display: grid; grid-template-columns: repeat(54, 1fr); grid-auto-flow: row; }
.swatches button { border: solid #33333380; border-width: 0 1px 1px 0; }
.pnav { width: 46px; flex: none; display: flex; align-items: center; justify-content: flex-end; gap: 3px; padding-right: 1px; }

.status { display: flex; align-items: center; height: 25px; flex: none; }
.style { flex: none; display: grid; grid-template-columns: 28px 53px 29px; width: 110px; line-height: 11px; }
.style dt { text-align: right; }
.style dd { white-space: nowrap; }
.style dd:nth-of-type(odd) { text-align: center; padding-left: 4px; }
.status label { flex: none; }
.opacity { width: 51px; margin-left: 2px; }
.layer { margin-left: 8px; padding-left: 5px; border-left: 2px solid #4a7be6; line-height: 10px; width: 17px; }
.sicon { width: 26px; }
.message { flex: 1; white-space: nowrap; padding-left: 3px; }
.pg { width: 12px; }
.page { width: 41px; margin: 0 5px; }
.pos { display: grid; grid-template-columns: 17px 28px; margin-left: 11px; line-height: 9px; width: 51px; }
.zoom { width: 59px; margin-left: 2px; }
.zoom + label { margin-left: 6px; }
.status .spin { margin-right: 1px; }
.status .rot { width: 62px; margin-left: 2px; margin-right: 7px; }
.rot input { padding-left: 9px; }

.menu { position: absolute; left: 635px; top: 19px; width: 113px; padding: 4px 3px 5px; background: #323232; border: 1px solid #252525; box-shadow: 0 0 2px #0008; }
.menu button { width: 100%; height: 18px; justify-content: flex-start; gap: 3px; padding-left: 3px; white-space: nowrap; }
.menu hr { height: 5px; margin: 0; border: 0; }
.menu .hot { background: #2850a0; color: #fff; }
.menu .sub { margin-left: auto; margin-right: 3px; }
.menu::after { content: ""; position: absolute; left: 48px; top: 100%; border: 7px solid transparent; border-top-color: #323232; border-bottom: 0; }
```

FILE: palette.js
```js
const rows = [
  "1a1a1a 333333 4d4d4d 666666 999999 b3b3b3 cccccc e6e6e6 ececec f2f2f2 ffffff 801515 f03028 808026 ffff4d 2f8020 7aff4d 348080 78ffff 000090 0000ff 741a80 f032f0 280000 500505 7f1212 a51c14 d42824 f8362a f34244 f26464 f28686 f5acac fadada 280b0f 501c20 6e2428 963034 c43c40 cc6064 d48488 dfafb4 efd8da 1e1e1e 453638 6a5052 8f6c6e ac9496 c8b7b9 e0dcdd f0eeee 2b1100 552200 944212 a84818",
  "c86020 f07030 f08848 f2a070 f5b48c f9ceb2 fde5d8 28160c 4a2e1a 714526 935831 be7648 cb8f68 d8aa8c e4c6b2 f2e2d8 241f1c 473f38 6a5e54 8f7c70 a89d94 c6bfb9 e2dfda 282400 504808 7c6e18 a8902c d0ac38 fcd048 fcd860 fce078 fce89c fcf0bc fdf8dc 242208 4c4818 746c28 9c9038 c4b048 d0bc68 dcc88c e8dcb4 f2ecd8 1f1f1a 45453a 68684f 8f8f70 a8a894 c6c6ba e2e2dc 222b00 445a10 6a8828 90ac38"
].map(row => row.split(" "));
rows[0].splice(rows[0].indexOf("f0eeee"), 1);
rows[0].splice(rows[0].indexOf("280b0f"), 0, ...(rows[0].length < rows[1].length ? ["fdeaea"] : []));
const box = document.getElementById("swatches");
for (const color of rows.flat()) {
  const swatch = document.createElement("button");
  swatch.style.background = "#" + color;
  swatch.setAttribute("aria-label", "#" + color);
  box.append(swatch);
}
```
